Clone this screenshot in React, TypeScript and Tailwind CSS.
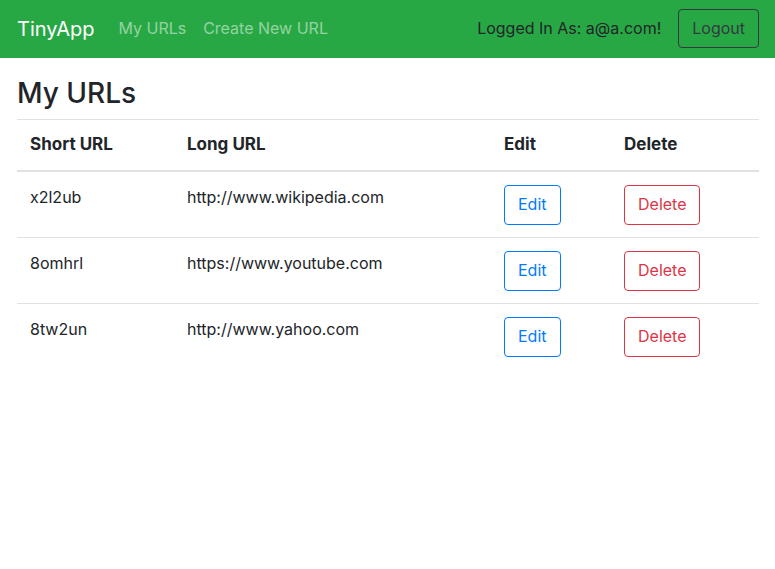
const urls = [
  { id: 'x2l2ub', long: 'http://www.wikipedia.com' },
  { id: '8omhrl', long: 'https://www.youtube.com' },
  { id: '8tw2un', long: 'http://www.yahoo.com' },
];

export default function App() {
  return (
    <div className="font-['Inter','Liberation_Sans',sans-serif] text-base leading-[25px] text-[#212529]">
      <nav className="flex items-center bg-[#28a745] pt-[9px] pr-4 pb-[10px] pl-[17px]">
        <a href="#" className="mr-6 text-xl leading-8 text-white">TinyApp</a>
        <div className="flex grow gap-[17px] text-white/50">
          <a href="#">My URLs</a>
          <a href="#">Create New URL</a>
        </div>
        <span className="mr-[17px]">Logged In As: a@a.com!</span>
        <button className="rounded border border-[#343a40] px-[13px] py-[6px] text-[#343a40]">Logout</button>
      </nav>
      <main className="pt-[18px] pr-4 pl-[17px]">
        <h1 className="mb-[9px] text-[28px] leading-[34px] font-medium">My URLs</h1>
        <table className="w-full border-collapse text-left">
          <thead className="text-[17px]">
            <tr className="border-t border-b-2 border-[#dee2e6]">
              <th className="w-[157px] p-[13px] pt-[12px] font-bold">Short URL</th>
              <th className="p-[13px] pt-[12px] font-bold">Long URL</th>
              <th className="w-[120px] p-[13px] pt-[12px] font-bold">Edit</th>
              <th className="w-[148px] p-[13px] pt-[12px] font-bold">Delete</th>
            </tr>
          </thead>
          <tbody>
            {urls.map((u) => (
              <tr key={u.id} className="border-t border-[#dee2e6] align-top">
                <td className="px-[13px] pt-[13px] pb-[12px]">{u.id}</td>
                <td className="px-[13px] pt-[13px] pb-[12px]">{u.long}</td>
                <td className="px-[13px] pt-[13px] pb-[12px]">
                  <button className="block rounded border border-[#007bff] px-[13px] pt-[6px] pb-[7px] text-[#007bff]">Edit</button>
                </td>
                <td className="px-[13px] pt-[13px] pb-[12px]">
                  <button className="block rounded border border-[#dc3545] px-[13px] pt-[6px] pb-[7px] text-[#dc3545]">Delete</button>
                </td>
              </tr>
            ))}
          </tbody>
        </table>
      </main>
    </div>
  );
}
